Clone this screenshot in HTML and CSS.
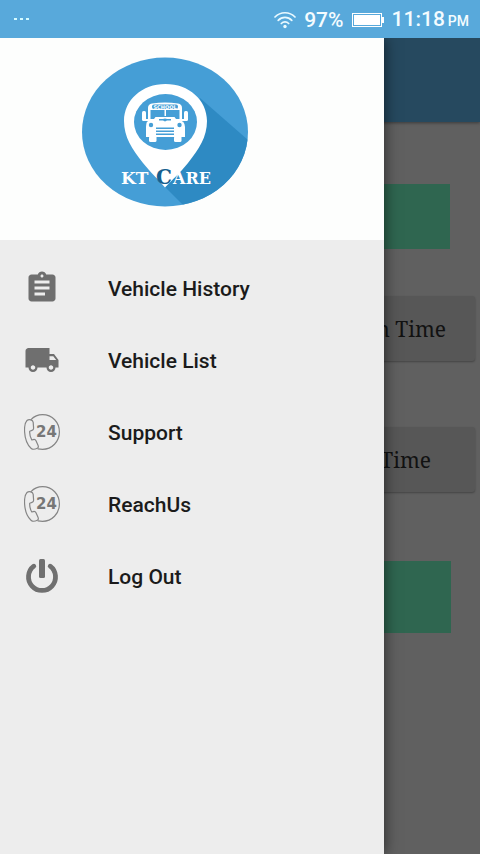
FILE: index.html
```html
<!DOCTYPE html>
<html lang="en">
<head>
<meta charset="utf-8">
<meta name="viewport" content="width=device-width, initial-scale=1">
<title>KT Care</title>
<link rel="stylesheet" href="styles.css">
</head>
<body>
<svg class="sprite" aria-hidden="true">
  <symbol id="support24" viewBox="0 0 36 36">
    <g fill="none" stroke="#858585" stroke-width="1.2" stroke-linejoin="round" stroke-linecap="round">
      <path d="M7 5.6C10.500 2 15 .7 18.500 .7C28.500 .7 35.400 8.500 35.400 18C35.400 27.500 28 35.300 18.500 35.300L14 34.800"/>
      <path d="M3 6.500C.6 9 .3 13 .6 18C1 24.500 3.500 31 7 34.200C8.500 35.600 11 35.400 13.300 34.200C14.600 33.500 14.600 32.500 14 31.200L12 26.800C11.400 25.500 10.500 25.200 9.200 25.600L7.800 26C6.300 23.500 5.500 20.500 5.700 17.200L8 16.400C9.300 16 9.700 15.300 9.600 14L9.200 8.400C9 6.700 8.300 6 6.800 5.800C5.300 5.500 4 5.600 3 6.500Z"/>
    </g>
    <text class="icon-24" x="12" y="23">24</text>
  </symbol>
</svg>

<header class="status">
  <span class="dots"><i></i><i></i><i></i></span>
  <div class="status-right">
    <svg class="wifi" viewBox="0 0 22 18" aria-label="Wi-Fi">
      <g fill="none" stroke="#eafaff" stroke-width="1.7" stroke-linecap="round">
        <path d="M1 6C6.500 .3 15.500 .3 21 6"/>
        <path d="M4.200 9.300C8 5.400 14 5.400 17.800 9.300"/>
        <path d="M7.300 12.500C9.400 10.400 12.600 10.400 14.700 12.500"/>
      </g>
      <circle cx="11" cy="15.500" r="1.700" fill="#eafaff"/>
    </svg>
    <span class="percent">97%</span>
    <svg class="battery" viewBox="0 0 32 14" aria-label="Battery">
      <rect x=".5" y=".5" width="29" height="13" fill="none" stroke="#fff"/>
      <rect x="2" y="2" width="26" height="10" fill="#fff"/>
      <rect x="30" y="4" width="2" height="6" fill="#fff"/>
    </svg>
    <span class="clock">11:18 <small>PM</small></span>
  </div>
</header>

<div class="stage">
  <main class="page">
    <div class="appbar"></div>
    <div class="content">
      <div class="banner"></div>
      <button class="time-button" type="button">In Time</button>
      <button class="time-button time-button-out" type="button">Out Time</button>
      <div class="banner banner-tall"></div>
    </div>
  </main>

  <aside class="drawer">
    <div class="drawer-header">
      <svg class="logo" viewBox="82 57 166 150" role="img" aria-label="KT Care">
        <defs><clipPath id="disc"><ellipse cx="165" cy="132" rx="83" ry="74.500"/></clipPath></defs>
        <ellipse cx="165" cy="132" rx="83" ry="74.500" fill="#459ed6"/>
        <path clip-path="url(#disc)" d="M200 98L256 147V215H193L165 187Z" fill="#2e8ac3"/>
        <path fill="#fff" d="M165.500 84C142 84 124 100 124 121C124 137 132 149 143 163C151 173 159 180 165 187.500C172 180 180 173 188 163C199 149 207 137 207 121C207 100 189 84 165.500 84Z"/>
        <ellipse cx="165.500" cy="122" rx="31.500" ry="28" fill="#459ed6"/>
        <g fill="#fff">
          <path d="M148 120V108Q148 104 152 103.500Q165 101.500 178 103.500Q182 104 182 108V120H179.500V110H150.500V120Z"/>
          <path d="M164.500 109H166V116H164.500Z"/>
          <path d="M148 119H154L155.500 117H174.500L176 119H182V122H148Z"/>
          <rect x="142" y="111" width="4" height="10" rx="1.500"/>
          <rect x="184" y="111" width="4" height="10" rx="1.500"/>
          <rect x="143" y="119" width="8" height="2"/>
          <rect x="179" y="119" width="8" height="2"/>
          <path d="M147 121.500H183Q185 124 185 127V137H146V127Q146 124 147 121.500Z"/>
          <rect x="149" y="136" width="7.500" height="6" rx="1.500"/>
          <rect x="174" y="136" width="7.500" height="6" rx="1.500"/>
        </g>
        <g fill="#459ed6">
          <circle cx="151" cy="125" r="2.200"/>
          <circle cx="179.500" cy="125" r="2.200"/>
          <path d="M159 119H163L165 118.500L167 119H171V120.500H167L165 121.500L163 120.500H159Z"/>
          <path d="M156 127.500H174V129H156ZM156 130.500H174V132H156ZM156 133.500H174V135H156Z"/>
        </g>
        <rect x="152" y="104.500" width="26" height="4.500" rx="2" fill="#459ed6"/>
        <text class="logo-school" x="165" y="108.500">SCHOOL</text>
        <text class="logo-word" x="121" y="184">KT</text>
        <text class="logo-word logo-c" x="156" y="184">C</text>
        <text class="logo-word logo-are" x="173" y="184">ARE</text>
      </svg>
    </div>
    <nav class="menu">
      <a href="#history">
        <svg viewBox="0 0 24 24"><path fill="#6f6f6f" d="M19 3h-4.180C14.400 1.840 13.300 1 12 1s-2.400.84-2.820 2H5c-1.100 0-2 .9-2 2v14c0 1.100.9 2 2 2h14c1.100 0 2-.9 2-2V5c0-1.100-.9-2-2-2zm-7 0c.55 0 1 .45 1 1s-.45 1-1 1-1-.45-1-1 .45-1 1-1zm2 14H7v-2h7v2zm3-4H7v-2h10v2zm0-4H7V7h10v2z"/></svg>
        <span>Vehicle History</span>
      </a>
      <a href="#list">
        <svg viewBox="0 0 24 24"><path fill="#6f6f6f" d="M20 8h-3V4H3c-1.100 0-2 .9-2 2v11h2c0 1.660 1.340 3 3 3s3-1.340 3-3h6c0 1.660 1.340 3 3 3s3-1.340 3-3h2v-5l-3-4zM6 18.500c-.83 0-1.500-.67-1.500-1.500s.67-1.500 1.500-1.500 1.500.67 1.500 1.500-.67 1.500-1.500 1.500zm13.500-9l1.960 2.500H17V9.500h2.500zm-1.500 9c-.83 0-1.500-.67-1.500-1.500s.67-1.500 1.500-1.500 1.500.67 1.500 1.500-.67 1.500-1.500 1.500z"/></svg>
        <span>Vehicle List</span>
      </a>
      <a href="#support">
        <svg><use href="#support24"/></svg>
        <span>Support</span>
      </a>
      <a href="#reach">
        <svg><use href="#support24"/></svg>
        <span>ReachUs</span>
      </a>
      <a href="#logout">
        <svg viewBox="0 0 36 36">
          <path d="M9.800 8.200A13.500 13.500 0 1 0 26.200 8.200" fill="none" stroke="#707070" stroke-width="4.800" stroke-linecap="round"/>
          <rect x="15" y="1" width="6" height="19" rx="1.500" fill="#707070"/>
        </svg>
        <span>Log Out</span>
      </a>
    </nav>
  </aside>
</div>
</body>
</html>
```
FILE: styles.css
```css
* {
  box-sizing: border-box;
}

body {
  margin: 0;
  min-height: 100vh;
  display: flex;
  flex-direction: column;
  font-family: Roboto, "Liberation Sans", sans-serif;
}

.sprite {
  position: absolute;
  width: 0;
  height: 0;
}

.icon-24 {
  font: 700 15px "DejaVu Sans", sans-serif;
  fill: #777;
}

/* Status bar */
.status {
  height: 38px;
  padding: 0 11px 0 14px;
  display: flex;
  align-items: center;
  justify-content: space-between;
  background: #58a9db;
  color: #f4fcff;
  font-size: 21px;
  font-weight: 500;
  line-height: 24px;
}

.dots {
  display: flex;
  gap: 3px;
}

.dots i {
  width: 3px;
  height: 2px;
  background: #d5fbff;
}

.status-right {
  display: flex;
  align-items: center;
  gap: 8px;
  padding-top: 2px;
}

.wifi {
  width: 22px;
  height: 18px;
}

.battery {
  width: 32px;
  height: 14px;
}

.clock {
  display: flex;
  align-items: baseline;
  gap: 3px;
}

.clock small {
  font-size: 14px;
}

/* Dimmed page behind the drawer */
.stage {
  position: relative;
  flex: 1;
  display: flex;
  overflow: hidden;
}

.page {
  flex: 1;
  background: #606060;
}

.appbar {
  height: 84px;
  background: #26495f;
  box-shadow: 0 1px 3px rgba(0, 0, 0, 0.4);
}

.content {
  display: flex;
  flex-direction: column;
  padding: 62px 5px 0;
}

.banner {
  height: 65px;
  margin: 0 25px 47px;
  background: #2f6650;
}

.banner-tall {
  height: 72px;
  margin: 3px 24px 0;
}

.time-button {
  height: 65px;
  margin: 0 0 66px;
  padding: 0 29px 0 0;
  border: 0;
  border-radius: 3px;
  background: #575757;
  box-shadow: 0 1px 2px rgba(0, 0, 0, 0.3);
  color: #121212;
  font: 21px "Noto Serif", "DejaVu Serif Condensed", "DejaVu Serif", serif;
  text-align: right;
}

.time-button-out {
  padding-right: 44px;
}

/* Drawer */
.drawer {
  position: absolute;
  top: 0;
  bottom: 0;
  left: 0;
  width: 80%;
  background: #ededed;
  box-shadow: 0 0 14px rgba(0, 0, 0, 0.6);
}

.drawer-header {
  height: 202px;
  padding: 19px 82px;
  background: #fdfefd;
}

.logo {
  display: block;
  width: 166px;
  height: 150px;
}

.logo-word {
  font: 700 17px "DejaVu Serif", serif;
  fill: #fff;
}

.logo-c {
  font-size: 20px;
  fill: #17608f;
}

.logo-are {
  font-size: 16px;
}

.logo-school {
  font: 700 5px "DejaVu Sans", sans-serif;
  fill: #fff;
  text-anchor: middle;
}

.menu {
  padding-top: 12px;
}

.menu a {
  height: 72px;
  padding: 0 24px;
  display: flex;
  align-items: center;
  gap: 48px;
  color: #1b1b1b;
  font-size: 21px;
  font-weight: 500;
  line-height: 24px;
  text-decoration: none;
}

.menu span {
  padding-top: 2px;
}

.menu svg {
  width: 36px;
  height: 36px;
}
```
